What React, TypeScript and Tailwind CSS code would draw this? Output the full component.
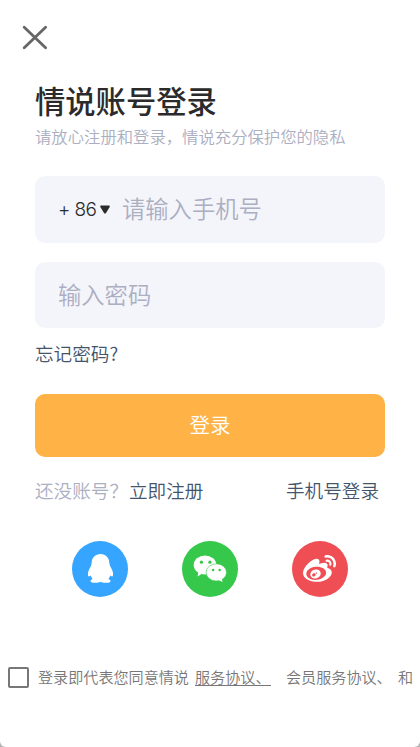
import { FaWeibo } from "react-icons/fa";

const QqIcon = () => (
  <svg viewBox="0 0 56 56" className="size-14" fill="#fff">
    <path d="M28.500 13c-5.200 0-8.600 3.600-8.800 8.500-.1 1.400-.4 2.600-1 4-1.600 2.600-2.800 5.200-2.800 7.800 0 1.600.5 2.300 1.100 2.100.6-.2 1.200-.5 1.700-.9.400 1.300 1.100 2.500 1.900 3.500-1.400.5-2.100 1.200-2.100 2.100 0 1.400 1.900 1.700 4.600 1.700 2.400 0 4.300-.4 5.400-1 1.100.6 3 1 5.400 1 2.700 0 4.700-.3 4.700-1.700 0-.9-.8-1.600-2.200-2.100.8-1 1.500-2.200 1.900-3.500.5.400 1.100.7 1.700.9.600.2 1.100-.5 1.100-2.100 0-2.600-1.200-5.200-2.800-7.800-.6-1.400-.9-2.600-1-4-.2-4.900-3.600-8.500-8.800-8.500z" />
  </svg>
);

const WechatIcon = () => (
  <svg viewBox="0 0 56 56" className="size-14">
    <g fill="#fff">
      <ellipse cx="23" cy="24" rx="11.300" ry="9.400" />
      <path d="M16.500 30.500 15.600 35.400 21 32z" />
    </g>
    <g fill="#fff" stroke="#35c84b" strokeWidth="0.6">
      <ellipse cx="34.300" cy="31.400" rx="10.200" ry="8.600" />
    </g>
    <path d="M36 38.800 40.500 41 39.700 36.500z" fill="#fff" />
    <g fill="#35c84b">
      <circle cx="19.400" cy="21.200" r="1.600" />
      <circle cx="27.900" cy="21.200" r="1.600" />
      <circle cx="31.100" cy="28.900" r="1.250" />
      <circle cx="37.600" cy="28.900" r="1.250" />
    </g>
  </svg>
);

const App = () => {
  return (
    <div className="h-[747px] w-[420px] overflow-hidden bg-[#b5b5b5]">
      <div className="flex h-full flex-col rounded-b-[6px] bg-white font-['Noto_Sans_CJK_SC',sans-serif] font-[350] whitespace-nowrap">
        <header className="h-[80px] pt-[25px] pl-[22px]">
          <svg viewBox="0 0 26 26" className="size-[26px]" stroke="#666" strokeWidth="2.800" strokeLinecap="round">
            <path d="M2.200 2.200 23.600 22.800M23.600 2.200 2.200 22.800" />
          </svg>
        </header>

        <main className="px-[35px]">
          <h1 className="h-[41px] text-[30.3px] leading-[40px] font-medium text-[#2b2b2b]">情说账号登录</h1>
          <p className="h-[30px] text-[16.35px] leading-[30px] text-[#acaec2]">请放心注册和登录，情说充分保护您的隐私</p>

          <div className="mt-[25px] flex h-[67px] items-center rounded-[10px] bg-[#f4f5fa] pl-[23px]">
            <span className="w-[40px] pt-px font-['Inter',sans-serif] text-[19px] font-light tracking-[-0.6px] text-[#2b2b2b]">+ 86</span>
            <svg viewBox="0 0 10 9" className="mr-[12px] ml-[2px] h-[9px] w-[10px] shrink-0" fill="#2b2b2b">
              <path d="M1.300.5h7.400c1 0 1.400.9.800 1.700L6 7.900c-.5.800-1.500.8-2 0L.5 2.200C-.1 1.400.3.5 1.300.5z" />
            </svg>
            <span className="pb-[2px] text-[23.3px] text-[#acaec2]">请输入手机号</span>
          </div>

          <div className="mt-[19px] flex h-[66px] items-center rounded-[10px] bg-[#f4f5fa] pl-[23px]">
            <span className="pb-[2px] text-[23.3px] text-[#acaec2]">输入密码</span>
          </div>

          <a className="mt-[11px] block h-[28px] text-[18.6px] leading-[28px] text-[#44546a]">忘记密码?</a>

          <button className="mt-[27px] block h-[63px] w-full rounded-[10px] bg-[#ffb347] pb-[2px] text-[20.5px] text-white">登录</button>

          <div className="mt-[19px] flex h-[28px] text-[18.6px] leading-[28px] text-[#44546a]">
            <span className="w-[94px] text-[#acaec2]">还没账号？</span>
            <a>立即注册</a>
            <a className="mr-[6px] ml-auto">手机号登录</a>
          </div>

          <div className="mt-[37px] flex justify-between px-[37px]">
            <span className="size-14 rounded-full bg-[#35a5ff]"><QqIcon /></span>
            <span className="size-14 rounded-full bg-[#35c84b]"><WechatIcon /></span>
            <span className="flex size-14 items-center justify-center rounded-full bg-[#f04e55] pr-px">
              <FaWeibo className="size-[33px] text-white" />
            </span>
          </div>
        </main>

        <footer className="mt-[68px] flex h-[24px] items-center overflow-hidden pl-[8px] text-[15.1px] leading-[24px] text-[#777]">
          <span className="mr-[9px] size-[21px] shrink-0 rounded-[2px] border-2 border-[#777]" />
          <span className="w-[157px] shrink-0 pb-[2px]">登录即代表您同意情说</span>
          <a className="mr-[15px] h-[18px] w-[76px] shrink-0 border-b border-[#777] leading-[17px]">服务协议、</a>
          <a className="w-[112px] shrink-0 pb-[2px]">会员服务协议、</a>
          <span className="pb-[2px]">和</span>
        </footer>
      </div>
    </div>
  );
};

export default App;
